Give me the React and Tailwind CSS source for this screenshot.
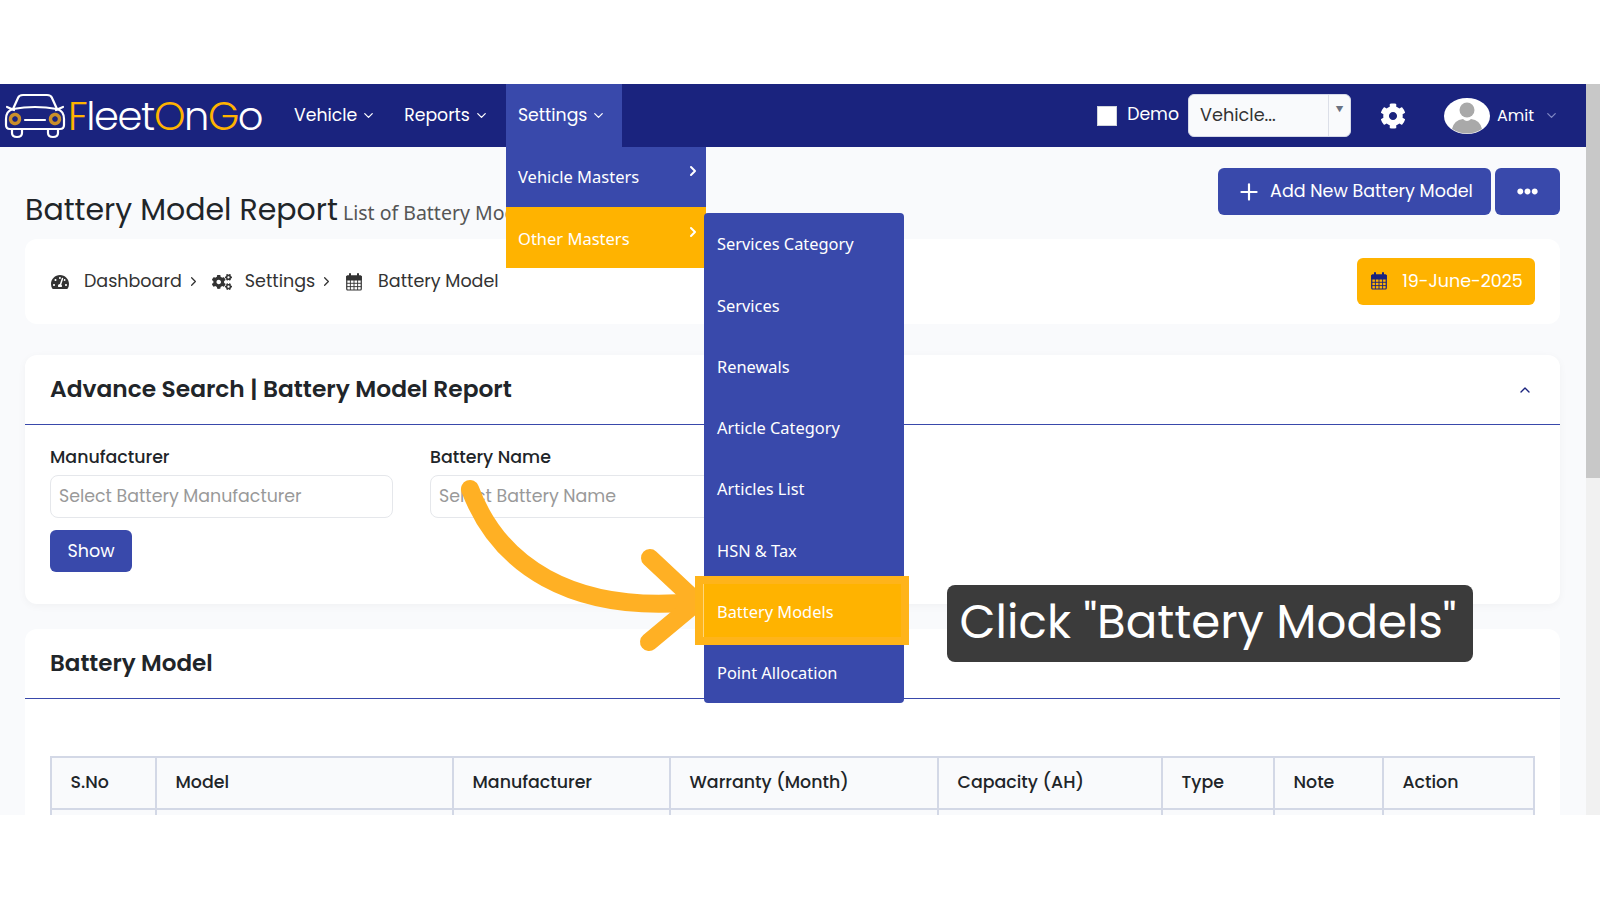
import { FaCog, FaCogs, FaEllipsisH, FaTachometerAlt } from "react-icons/fa";
import { FiChevronDown, FiChevronRight, FiChevronUp, FiPlus } from "react-icons/fi";

const subItems = ["Services Category", "Services", "Renewals", "Article Category", "Articles List", "HSN & Tax", "Battery Models", "Point Allocation"];

const columns = [
    ["S.No", "w-[105px]"],
    ["Model", "w-[297px]"],
    ["Manufacturer", "w-[217px]"],
    ["Warranty (Month)", "w-[268px]"],
    ["Capacity (AH)", "w-[224px]"],
    ["Type", "w-[112px]"],
    ["Note", "w-[109px]"],
    ["Action", "flex-1"],
];

const CarLogo = () => (
    <svg width="62" height="46" viewBox="2 0 60 46" fill="none" stroke="#fff" strokeWidth="2.2" strokeLinecap="round" strokeLinejoin="round">
        <path d="M10 16 L15 5 Q16 2 20 2 H44 Q48 2 49 5 L54 16" />
        <path d="M4 14 L11 17 M60 14 L53 17" />
        <path d="M10 16 Q32 12 54 16 Q61 18 61 26 V32 Q61 36 57 36 H7 Q3 36 3 32 V26 Q3 18 10 16 Z" />
        <path d="M22 27 H42" />
        <path d="M9 36 V40 Q9 44 14 44 Q19 44 19 40 V36 M45 36 V40 Q45 44 50 44 Q55 44 55 40 V36" />
        <circle cx="12" cy="26" r="4.5" stroke="#c98f2b" strokeWidth="3.5" strokeDasharray="1.5 1" />
        <circle cx="52" cy="26" r="4.5" stroke="#c98f2b" strokeWidth="3.5" strokeDasharray="1.5 1" />
    </svg>
);

const Avatar = () => (
    <svg width="46" height="36" viewBox="0 0 46 36">
        <ellipse cx="23" cy="18" rx="23" ry="18" fill="#fff" />
        <circle cx="23" cy="12" r="7.5" fill="#a9a9a9" />
        <path d="M8 31 Q10 22 19 21 Q23 25 27 21 Q36 22 38 31 Q23 40 8 31 Z" fill="#a9a9a9" />
    </svg>
);

const CalendarIcon = ({ className }) => (
    <svg className={className} width="16" height="18" viewBox="0 0 16 18" fill="none" stroke="currentColor">
        <rect x="0.75" y="3" width="14.5" height="14" rx="1" strokeWidth="1.2" />
        <path d="M0.75 3 H15.25 V7 H0.75 Z" fill="currentColor" />
        <path d="M4 1 V4 M12 1 V4" strokeWidth="2" strokeLinecap="round" />
        <path d="M0.75 10.3 H15.25 M0.75 13.6 H15.25 M4.4 7 V17 M8 7 V17 M11.6 7 V17" strokeWidth="0.9" />
    </svg>
);

const NavItem = ({ label }) => (
    <div className="flex items-center gap-1 text-[17.3px] text-white">
        {label}
        <FiChevronDown className="text-[15px]" />
    </div>
);

const App = () => {
    return (
        <div className="h-screen bg-white font-['Poppins','Inter',sans-serif] text-[#212529]">
            <div className="h-[84px]" />
            <div className="relative flex h-[731px] overflow-hidden">
                <div className="flex min-w-0 flex-1 flex-col overflow-hidden bg-[#f9fafc]">
                    <div className="flex h-[63px] shrink-0 items-center bg-[#1a237e] pr-[27px]">
                        <div className="ml-[4px] flex w-[263px] items-center">
                            <CarLogo />
                            <div className="ml-[2px] text-[40px] leading-none font-light tracking-[-1.4px] text-white">
                                <span className="text-[#ffb300]">F</span>leet<span className="text-[#ffb300]">O</span>n<span className="text-[#ffb300]">G</span>o
                            </div>
                        </div>
                        <div className="ml-[27px] flex items-center">
                            <NavItem label="Vehicle" />
                            <div className="ml-[28px]"><NavItem label="Reports" /></div>
                            <div className="ml-[17px] flex h-[63px] w-[116px] items-center bg-[#3949ab] pl-[12px]"><NavItem label="Settings" /></div>
                        </div>
                        <div className="ml-auto flex items-center">
                            <div className="h-[20px] w-[20px] border border-gray-300 bg-white" />
                            <span className="mb-[1px] ml-[10px] text-[17.3px] text-white">Demo</span>
                            <div className="ml-[9px] flex h-[43px] w-[163px] items-center rounded-md border border-[#d5d9e8] bg-[#f9fafc]">
                                <span className="mb-[1px] flex-1 pl-[11px] text-[17.7px] text-[#333]">Vehicle...</span>
                                <div className="flex h-full w-[22px] items-start justify-center border-l border-[#dcdfe8] pt-[9px] text-[8px] text-gray-500">▼</div>
                            </div>
                            <FaCog className="ml-[29px] text-[26px] text-white" />
                            <div className="ml-[38px]"><Avatar /></div>
                            <span className="ml-[7px] text-[16px] text-white">Amit</span>
                            <FiChevronDown className="ml-[10px] text-[15px] text-[#7f87c4]" />
                        </div>
                    </div>

                    <div className="flex min-h-0 flex-1 flex-col pr-[26px] pl-[25px]">
                        <div className="flex h-[92px] shrink-0 items-start justify-between">
                            <div className="mt-[43px] flex items-baseline gap-[5px]">
                                <h1 className="text-[30px] leading-[40px] text-[#212529]">Battery Model Report</h1>
                                <span className="font-['Noto_Sans'] text-[19.5px] text-[#555]">List of Battery Model</span>
                            </div>
                            <div className="mt-[21px] flex gap-[4px]">
                                <button className="flex h-[47px] w-[273px] items-center justify-center gap-[8px] rounded-md bg-[#3949ab] text-[17.5px] text-white">
                                    <FiPlus className="text-[26px]" />
                                    Add New Battery Model
                                </button>
                                <button className="flex h-[47px] w-[65px] items-center justify-center rounded-md bg-[#3949ab] text-[21px] text-white">
                                    <FaEllipsisH />
                                </button>
                            </div>
                        </div>

                        <div className="flex h-[85px] shrink-0 items-center justify-between rounded-xl bg-white pr-[25px] pl-[26px] text-[17.5px] text-[#333]">
                            <div className="flex items-center">
                                <FaTachometerAlt className="text-[18px] text-[#333]" />
                                <span className="ml-[15px]">Dashboard</span>
                                <FiChevronRight className="ml-[4px] text-[15px]" />
                                <FaCogs className="ml-[11px] text-[20px]" />
                                <span className="ml-[13px]">Settings</span>
                                <FiChevronRight className="ml-[4px] text-[15px]" />
                                <CalendarIcon className="ml-[12px]" />
                                <span className="ml-[16px]">Battery Model</span>
                            </div>
                            <div className="mb-[1px] flex h-[47px] w-[178px] items-center justify-center gap-[15px] rounded-md bg-[#ffb300] pl-[2px] text-white">
                                <CalendarIcon className="text-[#1a237e]" />
                                19-June-2025
                            </div>
                        </div>

                        <div className="mt-[31px] h-[249px] shrink-0 rounded-xl bg-white shadow-[0_2px_8px_rgba(0,0,0,0.04)]">
                            <div className="flex h-[70px] items-center justify-between border-b border-[#3949ab] pr-[27px] pl-[25px]">
                                <h2 className="text-[23.3px] font-semibold text-[#212529]">Advance Search | Battery Model Report</h2>
                                <FiChevronUp className="text-[#1a237e]" />
                            </div>
                            <div className="px-[25px] pt-[20px]">
                                <div className="flex gap-[37px]">
                                    <div>
                                        <div className="text-[17.4px] leading-[24px] font-medium text-[#212529]">Manufacturer</div>
                                        <div className="mt-[6px] flex h-[43px] w-[343px] items-center rounded-lg border border-[#e5e7eb] pl-[8px] text-[17.4px] text-[#999]">Select Battery Manufacturer</div>
                                    </div>
                                    <div>
                                        <div className="text-[17.4px] leading-[24px] font-medium text-[#212529]">Battery Name</div>
                                        <div className="mt-[6px] flex h-[43px] w-[343px] items-center rounded-lg border border-[#e5e7eb] pl-[8px] text-[17.4px] text-[#999]">Select Battery Name</div>
                                    </div>
                                </div>
                                <button className="mt-[12px] h-[42px] w-[82px] rounded-md bg-[#3949ab] text-[17.5px] text-white">Show</button>
                            </div>
                        </div>

                        <div className="mt-[25px] flex-1 rounded-t-xl bg-white">
                            <div className="flex h-[70px] items-center border-b border-[#3949ab] pl-[25px]">
                                <h2 className="text-[23px] font-semibold text-[#212529]">Battery Model</h2>
                            </div>
                            <div className="mx-[25px] mt-[57px] border-x-2 border-t-2 border-[#d3d8e6] bg-[#f9fafc]">
                                <div className="flex h-[52px] border-b-2 border-[#d3d8e6]">
                                    {columns.map(([title, width]) => (
                                        <div key={title} className={`flex items-center border-r-2 border-[#d3d8e6] pb-[1px] pl-[18.5px] text-[17.4px] font-medium text-[#212529] last:border-r-0 ${width}`}>{title}</div>
                                    ))}
                                </div>
                                <div className="flex h-[10px]">
                                    {columns.map(([title, width]) => (
                                        <div key={title} className={`border-r-2 border-[#d3d8e6] last:border-r-0 ${width}`} />
                                    ))}
                                </div>
                            </div>
                        </div>
                    </div>
                </div>

                <div className="w-[14px] shrink-0 bg-[#f1f1f1]">
                    <div className="h-[394px] bg-[#c8c8c8]" />
                </div>

                {/* open settings menu */}
                <div className="absolute top-[63px] left-[506px] w-[200px] font-['Noto_Sans'] text-[16.5px] text-white">
                    <div className="flex h-[60px] items-center justify-between bg-[#3949ab] pr-[5px] pl-[12px]">
                        <span>Vehicle Masters</span>
                        <FiChevronRight className="mb-[12px] text-[16px]" strokeWidth={3} />
                    </div>
                    <div className="flex h-[61px] items-center justify-between bg-[#ffb300] pr-[5px] pl-[12px]">
                        <span className="pt-[3px]">Other Masters</span>
                        <FiChevronRight className="mb-[12px] text-[16px]" strokeWidth={3} />
                    </div>
                </div>
                <div className="absolute top-[129px] left-[704px] h-[490px] w-[200px] rounded bg-[#3949ab] pt-[1px] font-['Noto_Sans'] text-[16.4px] text-white">
                    {subItems.map((item) => (
                        <div key={item} className="flex h-[61.25px] items-center pl-[13px]">{item}</div>
                    ))}
                </div>

                <svg className="pointer-events-none absolute top-[380px] left-[440px]" width="280" height="200" viewBox="0 0 280 200" fill="none" stroke="#ffb024" strokeWidth="18" strokeLinecap="round" strokeLinejoin="round">
                    <path d="M30 25 C58 100 130 150 255 138" />
                    <path d="M210 94 L257 138 L209 178" />
                </svg>

                {/* highlight of the step */}
                <div className="absolute top-[492px] left-[695px] flex h-[69px] w-[214px] items-center border-[8px] border-[#ffb41a] bg-[#ffb300] pt-[3px] pl-[10px] font-['Noto_Sans'] text-[16.4px] text-white">
                    <div className="absolute top-0 bottom-0 left-[0px] w-px bg-[#ffd57a]" />
                    <span className="pl-[4px]">Battery Models</span>
                </div>

                <div className="absolute top-[501px] left-[947px] flex h-[77px] w-[526px] items-center justify-center rounded-lg bg-[#3b3b3b] pr-[4px] pb-[3px] text-[46.7px] whitespace-nowrap text-white">Click "Battery Models"</div>
            </div>
        </div>
    );
};

export default App;
